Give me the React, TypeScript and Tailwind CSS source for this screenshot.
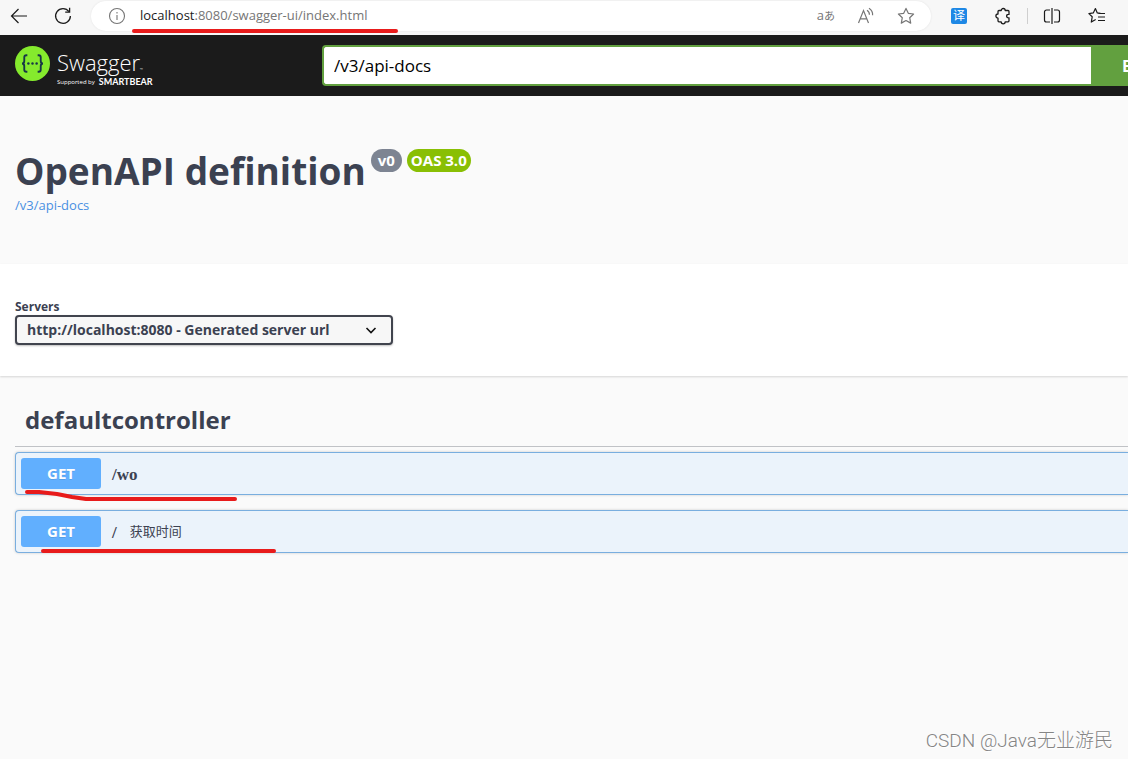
import { useState } from "react";

const operations = [
    {
        method: "GET",
        path: "/wo",
        summary: "",
        mark: "M12 40 L24 40 L42 42 L57 45 L71 47 L220 47",
    },
    {
        method: "GET",
        path: "/",
        summary: "获取时间",
        mark: "M28 41 L259 41",
    },
];

const servers = ["http://localhost:8080 - Generated server url"];

function BackIcon() {
    return (
        <svg width="18" height="18" viewBox="0 0 18 18" fill="none" stroke="#1b1b1b" strokeWidth="1.2">
            <path d="M17 9H1.5M8.5 2L1.5 9l7 7" />
        </svg>
    );
}

function ReloadIcon() {
    return (
        <svg width="18" height="18" viewBox="0 0 18 18" fill="none" stroke="#1b1b1b" strokeWidth="1.3">
            <path d="M15 4.6A7.4 7.4 0 1 0 16.4 9" />
            <path d="M15.6 0.8v4.4h-4.4" />
        </svg>
    );
}

function InfoIcon() {
    return (
        <svg width="18" height="18" viewBox="0 0 18 18" fill="none" stroke="#757575" strokeWidth="1.1">
            <circle cx="9" cy="9" r="7.5" />
            <path d="M9 8v5M9 5v1.4" />
        </svg>
    );
}

function ReadAloudIcon() {
    return (
        <svg width="18" height="18" viewBox="0 0 18 18" fill="none" stroke="#767676" strokeWidth="1.2">
            <path d="M1.5 16L6.5 3.5 11.5 16M3.3 11.8h6.4" />
            <path d="M10 3.2a5 5 0 0 1 2.4 4.6M12 1.2a7.6 7.6 0 0 1 3.6 7" />
        </svg>
    );
}

function StarIcon() {
    return (
        <svg width="18" height="18" viewBox="0 0 18 18" fill="none" stroke="#767676" strokeWidth="1.2" strokeLinejoin="round">
            <path d="M9 1.4l2.3 4.9 5.3.7-3.9 3.7 1 5.4L9 13.5l-4.7 2.6 1-5.4L1.4 7l5.3-.7z" />
        </svg>
    );
}

function PuzzleIcon() {
    return (
        <svg width="18" height="18" viewBox="0 0 18 18" fill="none" stroke="#1b1b1b" strokeWidth="1.3" strokeLinejoin="round">
            <path d="M5 3.500h2.200a2 2 0 0 1 4 0H14a1 1 0 0 1 1 1V7.400a1.800 1.800 0 1 0 0 3.400v3a1 1 0 0 1-1 1h-2.800a2 2 0 0 1-4 0H5a1 1 0 0 1-1-1v-2.600a2.100 2.100 0 0 1 0-4.200V4.500a1 1 0 0 1 1-1z" />
        </svg>
    );
}

function SplitIcon() {
    return (
        <svg width="18" height="18" viewBox="0 0 18 18" fill="none" stroke="#1b1b1b" strokeWidth="1.2">
            <path d="M7 3H3.5A2 2 0 0 0 1.5 5v8a2 2 0 0 0 2 2H7M11 3h3.5a2 2 0 0 1 2 2v8a2 2 0 0 1-2 2H11M9 1v16" />
        </svg>
    );
}

function FavoritesIcon() {
    return (
        <svg width="18" height="18" viewBox="0 0 18 18" fill="none" stroke="#1b1b1b" strokeWidth="1.2" strokeLinejoin="round">
            <path d="M12.500 6.300l-3.200-.4L7.400 1.600 5.300 5.900l-4.400.7 3.300 3.200-.9 5.300 4.400-2.500" />
            <path d="M10.500 6.500H17M10 10h7M10 13.500h7" />
        </svg>
    );
}

function SwaggerMark() {
    return (
        <svg width="35" height="35" viewBox="0 0 34 34">
            <circle cx="17" cy="17" r="17" fill="#85ea2d" />
            <g fill="none" stroke="#173647" strokeWidth="1.8">
                <path d="M12 9h-1c-1.600 0-2 .8-2 2v3.500c0 1.600-.8 2.500-2.200 2.500 1.400 0 2.200.9 2.200 2.500v3.500c0 1.200.4 2 2 2h1" />
                <path d="M22 9h1c1.600 0 2 .8 2 2v3.500c0 1.600.8 2.500 2.200 2.500-1.400 0-2.200.9-2.200 2.500v3.500c0 1.200-.4 2-2 2h-1" />
            </g>
            <g fill="#173647">
                <circle cx="13" cy="17" r="1.200" />
                <circle cx="17" cy="17" r="1.200" />
                <circle cx="21" cy="17" r="1.200" />
            </g>
        </svg>
    );
}

function BrowserBar() {
    return (
        <header className="flex h-[35px] items-start bg-[#f7f7f7] pt-px">
            <div className="flex h-[30px] w-[91px] shrink-0 items-center gap-[26px] pl-[10px]">
                <button type="button" aria-label="Back">
                    <BackIcon />
                </button>
                <button type="button" aria-label="Reload">
                    <ReloadIcon />
                </button>
            </div>

            {/* Address */}
            <div className="relative flex h-[30px] min-w-0 flex-1 items-center rounded-full bg-white pl-[17px] pr-4 shadow-[0_0_2px_#e0e0e0]">
                <InfoIcon />
                <p className="ml-[14px] flex-1 whitespace-nowrap text-[13px] text-[#767676]">
                    <span className="text-[#1b1b1b]">localhost</span>:8080/swagger-ui/index.html
                </p>
                <div className="flex items-center gap-[22px]">
                    <button type="button" aria-label="Translate" className="text-[13px] text-[#767676]">
                        a<span className="text-[11px]">あ</span>
                    </button>
                    <button type="button" aria-label="Read aloud">
                        <ReadAloudIcon />
                    </button>
                    <button type="button" aria-label="Add to favorites">
                        <StarIcon />
                    </button>
                </div>
                <svg className="absolute left-[39px] top-[27px]" width="270" height="6" aria-hidden="true">
                    <path d="M4 3H266" stroke="#e81b1b" strokeWidth="4" strokeLinecap="round" />
                </svg>
            </div>

            {/* Extensions */}
            <div className="flex h-[30px] shrink-0 items-center pl-5 pr-[22px]">
                <button type="button" className="h-4 w-4 rounded-xs bg-[#1e88e5] text-center text-[12px] leading-4 text-white">
                    译
                </button>
                <button type="button" aria-label="Extensions" className="ml-[27px]">
                    <PuzzleIcon />
                </button>
                <span className="ml-[15px] h-4 w-px bg-[#cfcfcf]" />
                <button type="button" aria-label="Split screen" className="ml-[15px]">
                    <SplitIcon />
                </button>
                <button type="button" aria-label="Favorites" className="ml-[27px]">
                    <FavoritesIcon />
                </button>
            </div>
        </header>
    );
}

function Topbar() {
    const [url, setUrl] = useState("/v3/api-docs");

    return (
        <div className="flex h-[61px] items-center bg-[#1b1b1b]">
            <a href="#" className="flex w-[322px] shrink-0 items-start pl-[15px] text-white">
                <SwaggerMark />
                <span className="ml-[7px] block">
                    <span className="flex items-end text-[22px] font-light leading-8">
                        Swagger
                        <span className="text-[4px] leading-4">™</span>
                    </span>
                    <span className="flex items-center gap-1 whitespace-nowrap text-[6px] leading-2">
                        Supported by
                        <b className="font-['Lato',sans-serif] text-[9px]">SMARTBEAR</b>
                    </span>
                </span>
            </a>
            <form className="flex h-[41px] min-w-0 flex-1" onSubmit={(e) => e.preventDefault()}>
                <input
                    aria-label="API definition"
                    className="min-w-0 flex-1 rounded-l border-2 border-r-0 border-[#62a03f] bg-white px-[10px] text-[17px] text-black outline-none"
                    value={url}
                    onChange={(e) => setUrl(e.target.value)}
                />
                <button type="submit" className="w-[37px] shrink-0 overflow-hidden whitespace-nowrap bg-[#62a03f] pl-[31px] text-left text-base font-bold text-white">
                    Explore
                </button>
            </form>
        </div>
    );
}

export default function App() {
    return (
        <div className="relative flex min-h-screen flex-col overflow-hidden bg-[#fafafa] font-['Open_Sans','Noto_Sans_CJK_SC',sans-serif] text-[#3b4151]">
            <BrowserBar />
            <Topbar />

            {/* Info */}
            <section className="h-[168px] pl-[15px] pt-[50px]">
                <div className="flex items-start gap-[5px]">
                    <h1 className="text-[37px] font-bold leading-[49px]">OpenAPI definition</h1>
                    <div className="mt-[3px] flex gap-[5px] text-[15px] font-bold leading-[23px] text-white">
                        <span className="rounded-full bg-[#7d8492] px-[7px]">v0</span>
                        <span className="rounded-full bg-[#89bf04] px-1">OAS 3.0</span>
                    </div>
                </div>
                <a href="#" className="block text-[13px] leading-5 text-[#4990e2]">
                    /v3/api-docs
                </a>
            </section>

            {/* Servers */}
            <section className="h-[112px] bg-white pl-[15px] pt-[34px] shadow-[0_1px_2px_rgba(0,0,0,0.15)]">
                <label htmlFor="servers" className="block text-xs font-bold leading-[17px]">
                    Servers
                </label>
                <div className="relative w-[378px]">
                    <select
                        id="servers"
                        className="block h-[30px] w-full appearance-none rounded border-2 border-[#41444e] bg-[#f7f7f7] px-[10px] text-sm font-bold shadow-[0_1px_2px_rgba(0,0,0,0.25)]"
                    >
                        {servers.map((server) => (
                            <option key={server}>{server}</option>
                        ))}
                    </select>
                    <svg className="pointer-events-none absolute right-4 top-[10px]" width="12" height="10" viewBox="0 0 12 10" fill="none" stroke="#111" strokeWidth="1.6">
                        <path d="M1.500 3L6 7.500 10.500 3" />
                    </svg>
                </div>
            </section>

            {/* Operations */}
            <section className="pl-[15px]">
                <h2 className="h-[71px] border-b border-[#3b4151]/30 pl-[10px] pt-6 text-2xl font-bold leading-10">
                    defaultcontroller
                </h2>
                <div className="mt-[5px] flex flex-col gap-[15px]">
                    {operations.map((op) => (
                        <div key={op.path} className="relative">
                            <button
                                type="button"
                                className="flex h-[43px] w-full items-center rounded-l border border-r-0 border-[#79aedf] bg-[#ebf3fb] p-[5px] text-left shadow-[0_0_3px_rgba(0,0,0,0.19)]"
                            >
                                <span className="w-20 rounded-[3px] bg-[#61affe] text-center text-[15px] font-bold leading-[31px] text-white [text-shadow:0_1px_0_rgba(0,0,0,0.1)]">
                                    {op.method}
                                </span>
                                <span className="ml-[11px] pt-[2px] font-['Liberation_Serif',serif] text-[17px] font-bold">{op.path}</span>
                                {op.summary && <span className="ml-[13px] text-[13px]">{op.summary}</span>}
                            </button>
                            <svg className="pointer-events-none absolute left-0 top-0 overflow-visible" width="264" height="50" aria-hidden="true">
                                <path d={op.mark} fill="none" stroke="#e81b1b" strokeWidth="4" strokeLinecap="round" strokeLinejoin="round" />
                            </svg>
                        </div>
                    ))}
                </div>
            </section>

            <p className="absolute bottom-1 right-[15px] font-['Roboto','Noto_Sans_CJK_SC',sans-serif] text-[19px] font-light text-[#858585] [text-shadow:1px_1px_0_#ffffff]">
                CSDN @Java无业游民
            </p>
        </div>
    );
}
